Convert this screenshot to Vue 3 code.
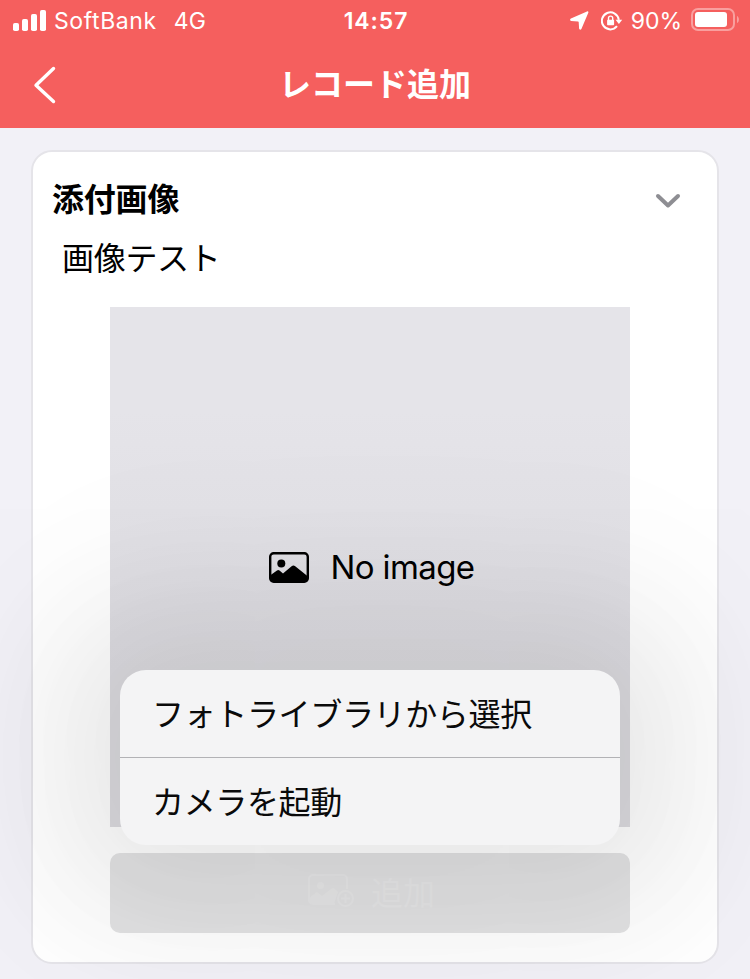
<template>
  <div class="screen">
    <header class="header">
      <div class="status-bar">
        <div class="status-left">
          <svg class="signal" width="33" height="22" viewBox="0 0 33 22">
            <rect x="0" y="13" width="6" height="8" rx="1.8" />
            <rect x="9" y="9" width="6" height="12" rx="1.8" />
            <rect x="18" y="4" width="6" height="17" rx="1.8" />
            <rect x="27" y="0" width="6" height="21" rx="1.8" />
          </svg>
          <span class="carrier">SoftBank</span>
          <span class="network">4G</span>
        </div>
        <span class="time">14:57</span>
        <div class="status-right">
          <svg class="location" width="19" height="19" viewBox="0 0 19 19">
            <path d="M17 .4.900 7.500c-1.200.6-1 2.500.3 2.500l6.800.5c.4 0 .7.3.7.7l.4 6.400c.1 1.400 1.700 1.600 2.300.4L18.300 1.800C18.700.7 18 0 17 .4Z" />
          </svg>
          <svg class="rotation" width="22" height="20" viewBox="0 0 22 20">
            <path class="ring" d="M16 15.200A8.500 8.500 0 1 1 17.800 8.800" />
            <path d="M14.600 8.800h6.600L17.900 13Z" />
            <rect x="6.100" y="8.700" width="7" height="5.600" rx=".8" />
            <path class="shackle" d="M7.500 9V7.200a2.100 2.100 0 0 1 4.200 0V9" />
          </svg>
          <span class="percent">90%</span>
          <svg class="battery" width="49" height="24" viewBox="0 0 49 24">
            <rect class="shell" x="1" y="1" width="42" height="21" rx="6" />
            <rect x="4" y="4" width="32" height="15" rx="3" />
            <path class="cap" d="M46 8c2.600 1 2.600 6 0 7Z" />
          </svg>
        </div>
      </div>
      <div class="nav-bar">
        <button class="back" aria-label="戻る">
          <svg width="24" height="38" viewBox="0 0 24 38">
            <path d="M20.500 2.500 3 19.300l17.500 16.200" />
          </svg>
        </button>
        <h1 class="title">レコード追加</h1>
      </div>
    </header>

    <main class="content">
      <section class="card">
        <div class="card-header" @click="toggleSection">
          <h2>添付画像</h2>
          <svg class="chevron" width="26" height="16" viewBox="0 0 26 16">
            <path d="m3 3 10 9.500L23 3" />
          </svg>
        </div>
        <template v-if="isOpen">
          <p class="field-label">画像テスト</p>
          <div class="field-body">
            <div class="preview">
              <svg width="40" height="31" viewBox="0 0 40 31">
                <rect class="frame" x="1.200" y="1.200" width="37.600" height="28.600" rx="3.500" />
                <circle cx="12.300" cy="11.500" r="4" />
                <path d="M1 23.500 8 18.500c.9-.7 1.600-.7 2.500 0l3.500 3 8.600-7.300c1.200-1 2.400-1 3.600 0L39 24.500V27a3 3 0 0 1-3 3H4a3 3 0 0 1-3-3Z" />
              </svg>
              <span>No image</span>
            </div>
            <button class="add-button" @click="showMenu = !showMenu">
              <svg width="48" height="34" viewBox="0 0 48 34">
                <path class="outline" d="M27 30H5a4 4 0 0 1-4-4V5a4 4 0 0 1 4-4h30a4 4 0 0 1 4 4v10" />
                <circle cx="12.500" cy="11.500" r="3.500" />
                <path d="m1 24 8-6 5 4 9-7c2-1 3-1 5 1l2 2-4 12H5c-3 0-4-2-4-4Z" />
                <circle class="outline" cx="37.500" cy="24.500" r="7.500" />
                <path class="outline" d="M33 24.500h9M37.500 20v9" />
              </svg>
              <span>追加</span>
            </button>
            <div v-if="showMenu" class="menu">
              <button v-for="item in menuItems" :key="item" class="menu-item" @click="showMenu = false">
                {{ item }}
              </button>
            </div>
          </div>
        </template>
      </section>
    </main>
  </div>
</template>

<script setup>
import { ref } from 'vue';

const isOpen = ref(true);
const showMenu = ref(true);
const menuItems = ['フォトライブラリから選択', 'カメラを起動'];

const toggleSection = () => {
  isOpen.value = !isOpen.value;
};
</script>

<style>
body {
  margin: 0;
  background: #f2f1f7;
}
</style>

<style scoped>
.screen {
  height: 979px;
  overflow: hidden;
  background: #f2f1f7;
  color: #000;
  font-family: Inter, "Noto Sans CJK JP", sans-serif;
}

button {
  padding: 0;
  border: 0;
  background: none;
  color: inherit;
  font: inherit;
}

svg {
  display: block;
  flex-shrink: 0;
}

h1,
h2,
p {
  margin: 0;
}

.header {
  position: relative;
  z-index: 1;
  height: 128px;
  background: #f55f5e;
  color: #fff;
}

.status-bar {
  display: grid;
  grid-template-columns: 1fr auto 1fr;
  align-items: center;
  height: 40px;
  padding: 0 11px 0 13px;
  font-size: 23px;
  line-height: 40px;
}

.status-bar svg {
  fill: #fff;
}

.status-bar span {
  padding-top: 1px;
}

.status-left,
.status-right {
  display: flex;
  align-items: center;
  height: 40px;
}

.carrier {
  margin-left: 8px;
  letter-spacing: 0.6px;
}

.network {
  margin-left: 17px;
}

.time {
  font-weight: 600;
  letter-spacing: 0.9px;
}

.status-right {
  justify-content: flex-end;
  margin-right: -1px;
}

.rotation {
  margin-left: 12px;
}

.rotation .ring,
.rotation .shackle {
  fill: none;
  stroke: #fff;
  stroke-width: 2;
}

.rotation .shackle {
  stroke-width: 1.4;
}

.percent {
  margin: 0 9px 0 8px;
}

.battery {
  margin-top: -1px;
}

.battery .shell {
  fill: none;
  stroke: rgba(255, 255, 255, 0.4);
  stroke-width: 2;
}

.battery .cap {
  fill: rgba(255, 255, 255, 0.4);
}

.nav-bar {
  display: grid;
  grid-template-columns: 80px 1fr 80px;
  align-items: center;
  height: 90px;
}

.back {
  padding-left: 33px;
}

.back path {
  fill: none;
  stroke: #fff;
  stroke-width: 3.4;
  stroke-linecap: round;
  stroke-linejoin: round;
}

.title {
  font-size: 32px;
  font-weight: 600;
  line-height: 48px;
  text-align: center;
}

.content {
  padding: 22px 31px 0;
}

.card {
  box-sizing: border-box;
  height: 814px;
  border: 2px solid #e5e4e9;
  border-radius: 21px;
  background: #fff;
}

.card-header {
  display: flex;
  align-items: center;
  justify-content: space-between;
  height: 48px;
  padding: 24px 36px 0 19px;
}

.card-header h2 {
  font-size: 32px;
  font-weight: 600;
  line-height: 48px;
  letter-spacing: -0.2px;
}

.chevron {
  margin-top: 2px;
}

.chevron path {
  fill: none;
  stroke: #8e8e93;
  stroke-width: 4;
  stroke-linecap: round;
  stroke-linejoin: round;
}

.field-label {
  padding: 11px 0 0 29px;
  font-size: 32px;
  line-height: 48px;
  letter-spacing: -0.3px;
}

.field-body {
  position: relative;
  width: 520px;
  margin: 24px 0 0 77px;
}

.preview {
  display: flex;
  align-items: center;
  justify-content: center;
  gap: 21px;
  height: 520px;
  padding-left: 4px;
  box-sizing: border-box;
  background: linear-gradient(#e5e4e9 20%, #dddce1 70%, #dddce1);
  font-size: 33px;
  letter-spacing: -0.6px;
}

.preview .frame {
  fill: none;
  stroke: #000;
  stroke-width: 2.4;
}

.add-button {
  display: flex;
  align-items: center;
  justify-content: center;
  gap: 15px;
  width: 100%;
  height: 80px;
  padding: 0 0 4px 3px;
  margin-top: 26px;
  border-radius: 10px;
  background: #e3e3e4;
  color: #e7e7e8;
  font-size: 32px;
}

.add-button svg {
  fill: #e7e7e8;
}

.add-button .outline {
  fill: none;
  stroke: #e7e7e8;
  stroke-width: 2;
}

/* Popup over the preview, the wide shadow dims the whole card */
.menu {
  position: absolute;
  top: 363px;
  left: 10px;
  width: 500px;
  border-radius: 26px;
  background: #f4f4f5;
  box-shadow:
    0 0 130px 45px rgba(20, 20, 0, 0.065),
    0 0 190px 100px rgba(20, 20, 10, 0.045);
}

.menu-item {
  display: block;
  box-sizing: border-box;
  width: 100%;
  height: 87px;
  padding: 0 0 4px 32px;
  color: #0a0a0a;
  font-size: 32px;
  letter-spacing: -0.35px;
  text-align: left;
}

.menu-item + .menu-item {
  height: 88px;
  border-top: 1px solid #b2b2b5;
}
</style>
